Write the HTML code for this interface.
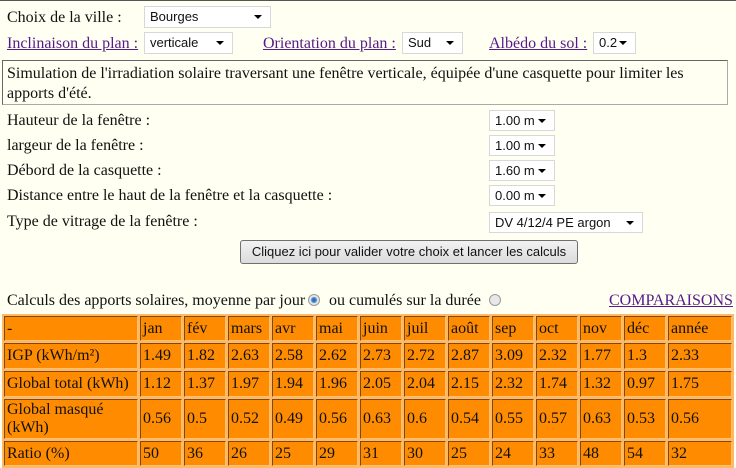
<!DOCTYPE html>
<html><head><meta charset="utf-8"><style>
*{box-sizing:border-box;margin:0;padding:0}
body{width:736px;height:466px;background:#fffff2;font-family:"Liberation Serif",serif;font-size:16px;color:#111;position:relative;overflow:hidden;border-top:1px solid #555}
.a{position:absolute;white-space:nowrap;line-height:18px}
.l{color:#551a8b;text-decoration:underline}
.s{position:absolute;background:#fff;border:1px solid #d8d8d8;font-family:"Liberation Sans",sans-serif;font-size:13px;padding-left:5px;line-height:19px}
.s:after{content:"";position:absolute;right:8px;top:8px;border-left:4px solid transparent;border-right:4px solid transparent;border-top:4px solid #000}
table{position:absolute;left:2px;top:313px;width:732px;border-collapse:separate;border-spacing:2px;background:#ffb866}
td{background:#ff8c00;border:1px solid;border-color:#7a4a10 #ffc070 #ffc070 #7a4a10;padding:0 2px;line-height:18px;vertical-align:middle;font-size:16px}
.radio{position:absolute;width:12px;height:12px;border-radius:50%;border:1px solid #9a9a9a;background:#e8e8e8}
</style></head><body>
<div class="a" style="left:7px;top:8px">Choix de la ville :</div>
<div class="s" style="left:144px;top:5px;width:127px;height:22px">Bourges</div>
<div class="a l" style="left:7px;top:34px">Inclinaison du plan :</div>
<div class="s" style="left:144px;top:31px;width:89px;height:22px">verticale</div>
<div class="a l" style="left:263px;top:34px">Orientation du plan :</div>
<div class="s" style="left:402px;top:31px;width:61px;height:22px">Sud</div>
<div class="a l" style="left:489px;top:34px">Albédo du sol :</div>
<div class="s" style="left:593px;top:31px;width:43px;height:22px">0.2</div>
<div style="position:absolute;left:2px;top:59px;width:726px;height:45px;border:1px solid #666;border-right-color:#aaa;border-bottom-color:#aaa;padding:3px 4px;line-height:20px;font-size:16px">Simulation de l'irradiation solaire traversant une fenêtre verticale, équipée d'une casquette pour limiter les apports d'été.</div>
<div class="a" style="left:7px;top:111px">Hauteur de la fenêtre :</div>
<div class="a" style="left:7px;top:136px">largeur de la fenêtre :</div>
<div class="a" style="left:7px;top:161px">Débord de la casquette :</div>
<div class="a" style="left:7px;top:186px">Distance entre le haut de la fenêtre et la casquette :</div>
<div class="a" style="left:7px;top:212px">Type de vitrage de la fenêtre :</div>
<div class="s" style="left:489px;top:109px;width:66px;height:21px">1.00 m</div>
<div class="s" style="left:489px;top:134px;width:66px;height:21px">1.00 m</div>
<div class="s" style="left:489px;top:159px;width:66px;height:21px">1.60 m</div>
<div class="s" style="left:489px;top:184px;width:66px;height:21px">0.00 m</div>
<div class="s" style="left:489px;top:211px;width:154px;height:21px">DV 4/12/4 PE argon</div>
<div style="position:absolute;left:240px;top:239px;width:338px;height:24px;border:1px solid #707070;border-radius:3px;background:linear-gradient(#f2f2f2,#dcdcdc);font-family:'Liberation Sans',sans-serif;font-size:13px;text-align:center;line-height:22px">Cliquez ici pour valider votre choix et lancer les calculs</div>
<div class="a" style="left:7px;top:291px">Calculs des apports solaires, moyenne par jour</div>
<div class="radio" style="left:308px;top:293px;background:radial-gradient(circle,#1a5fb0 0,#4a90d0 2.5px,#e8e8e8 3.5px)"></div>
<div class="a" style="left:329px;top:291px">ou cumulés sur la durée</div>
<div class="radio" style="left:489px;top:293px"></div>
<div class="a l" style="left:609px;top:291px">COMPARAISONS</div>
<table>
<tr><td style="width:134px;height:25px">-</td><td style="width:42px">jan</td><td style="width:42px">fév</td><td style="width:42px">mars</td><td style="width:42px">avr</td><td style="width:42px">mai</td><td style="width:42px">juin</td><td style="width:42px">juil</td><td style="width:42px">août</td><td style="width:42px">sep</td><td style="width:42px">oct</td><td style="width:42px">nov</td><td style="width:42px">déc</td><td>année</td></tr>
<tr><td style="height:26px">IGP (kWh/m²)</td><td>1.49</td><td>1.82</td><td>2.63</td><td>2.58</td><td>2.62</td><td>2.73</td><td>2.72</td><td>2.87</td><td>3.09</td><td>2.32</td><td>1.77</td><td>1.3</td><td>2.33</td></tr>
<tr><td style="height:26px">Global total (kWh)</td><td>1.12</td><td>1.37</td><td>1.97</td><td>1.94</td><td>1.96</td><td>2.05</td><td>2.04</td><td>2.15</td><td>2.32</td><td>1.74</td><td>1.32</td><td>0.97</td><td>1.75</td></tr>
<tr><td style="height:40px">Global masqué (kWh)</td><td>0.56</td><td>0.5</td><td>0.52</td><td>0.49</td><td>0.56</td><td>0.63</td><td>0.6</td><td>0.54</td><td>0.55</td><td>0.57</td><td>0.63</td><td>0.53</td><td>0.56</td></tr>
<tr><td style="height:25px">Ratio (%)</td><td>50</td><td>36</td><td>26</td><td>25</td><td>29</td><td>31</td><td>30</td><td>25</td><td>24</td><td>33</td><td>48</td><td>54</td><td>32</td></tr>
</table>
</body></html>
